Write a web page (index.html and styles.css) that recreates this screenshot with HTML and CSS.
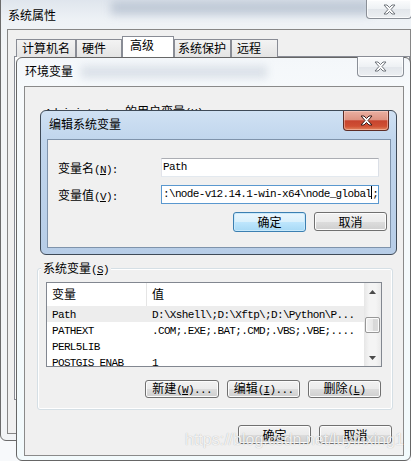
FILE: index.html
```html
<!DOCTYPE html>
<html>
    <head>
        <meta charset="utf-8">
        <title>系统属性 - 环境变量</title>
        <link rel="stylesheet" href="styles.css">
    </head>
    <body>
        <!-- 系统属性 -->
        <div class="win win-sys">
            <div class="win-title">
                <span class="glass glass-sys"></span>
                <span class="title-text">系统属性</span>
                <button class="close">
                    <svg viewBox="0 0 13 11" width="13" height="11"><path d="M1 1h3l2.5 2.5L9 1h3L8 5.5 12 10H9L6.5 7.5 4 10H1l4-4.5z"/></svg>
                </button>
            </div>
            <div class="sys-body">
                <div class="tabs">
                    <span class="tab tab-name">计算机名</span>
                    <span class="tab tab-hw">硬件</span>
                    <span class="tab tab-adv active">高级</span>
                    <span class="tab tab-prot">系统保护</span>
                    <span class="tab tab-remote">远程</span>
                </div>
                <div class="tab-page"></div>
            </div>
        </div>

        <!-- 环境变量 -->
        <div class="win win-env">
            <div class="win-title">
                <span class="glass glass-env"></span>
                <span class="title-text">环境变量</span>
                <button class="close">
                    <svg viewBox="0 0 13 11" width="13" height="11"><path d="M1 1h3l2.5 2.5L9 1h3L8 5.5 12 10H9L6.5 7.5 4 10H1l4-4.5z"/></svg>
                </button>
            </div>
            <div class="env-body">
                <div class="user-group">
                    <span class="mono">Administrator</span> 的用户变量<span class="mono">(<u>U</u>)</span>
                </div>

                <div class="group sys-group">
                    <span class="group-label">系统变量<span class="mono">(<u>S</u>)</span></span>

                    <div class="list">
                        <div class="list-main">
                            <div class="list-head">
                                <span class="col col-name">变量</span>
                                <span class="col col-value">值</span>
                            </div>
                            <div class="row selected">
                                <span class="col col-name mono">Path</span>
                                <span class="col col-value mono">D:\Xshell\;D:\Xftp\;D:\Python\P...</span>
                            </div>
                            <div class="row">
                                <span class="col col-name mono">PATHEXT</span>
                                <span class="col col-value mono">.COM;.EXE;.BAT;.CMD;.VBS;.VBE;....</span>
                            </div>
                            <div class="row">
                                <span class="col col-name mono">PERL5LIB</span>
                                <span class="col col-value mono"></span>
                            </div>
                            <div class="row">
                                <span class="col col-name mono">POSTGIS_ENAB</span>
                                <span class="col col-value mono">1</span>
                            </div>
                        </div>
                        <div class="scrollbar">
                            <span class="sb-btn">
                                <svg viewBox="0 0 7 4" width="7" height="4"><path d="M0 4L3.5 0 7 4z"/></svg>
                            </span>
                            <span class="sb-track"><span class="sb-thumb"></span></span>
                            <span class="sb-btn">
                                <svg viewBox="0 0 7 4" width="7" height="4"><path d="M0 0h7L3.5 4z"/></svg>
                            </span>
                        </div>
                    </div>

                    <div class="group-actions">
                        <button class="btn btn-new">新建<span class="mono">(<u>W</u>)...</span></button>
                        <button class="btn">编辑<span class="mono">(<u>I</u>)...</span></button>
                        <button class="btn">删除<span class="mono">(<u>L</u>)</span></button>
                    </div>
                </div>

                <div class="env-actions">
                    <button class="btn btn-tall">确定</button>
                    <button class="btn btn-tall">取消</button>
                </div>
            </div>
        </div>

        <!-- 编辑系统变量 -->
        <div class="win win-edit">
            <div class="win-title">
                <span class="title-text">编辑系统变量</span>
                <button class="close close-red">
                    <svg viewBox="0 0 13 11" width="13" height="11"><path d="M1 1h3l2.5 2.5L9 1h3L8 5.5 12 10H9L6.5 7.5 4 10H1l4-4.5z"/></svg>
                </button>
            </div>
            <div class="edit-body">
                <div class="field">
                    <label>变量名<span class="mono">(<u>N</u>):</span></label>
                    <span class="box mono">Path</span>
                </div>
                <div class="field">
                    <label>变量值<span class="mono">(<u>V</u>):</span></label>
                    <span class="box focus mono">:\node-v12.14.1-win-x64\node_global<span class="caret"></span>;</span>
                </div>
                <div class="edit-actions">
                    <button class="btn btn-tall btn-default">确定</button>
                    <button class="btn btn-tall">取消</button>
                </div>
            </div>
        </div>

        <div class="watermark">https://blog.csdn.net/luyinxing1</div>
    </body>
</html>
```

FILE: styles.css
```css
:root {
    --face: #f0f0f0;
    --tab-border: #898c95;
    --btn-border: #707070;
    --cjk: "Noto Sans CJK SC", sans-serif;
    --mono: "Liberation Mono", "Noto Sans CJK SC", monospace;
}

* {
    box-sizing: border-box;
}

body {
    margin: 0;
    width: 411px;
    height: 461px;
    overflow: hidden;
    position: relative;
    background-color: #f7f9fb;
    font-family: var(--cjk);
    font-size: 12px;
    color: #000;
}

.mono {
    font-family: var(--mono);
    font-size: 11px;
    letter-spacing: -0.65px;
}

u {
    text-decoration-thickness: 1px;
    text-underline-offset: 1px;
}

/* windows */

.win {
    position: absolute;
    display: flex;
    flex-direction: column;
    border: 1px solid #6b6b6b;
    border-radius: 6px;
}

.win-title {
    position: relative;
    display: flex;
    flex: none;
    align-items: center;
    line-height: 16px;
}

.title-text {
    position: relative;
}

.glass {
    position: absolute;
    filter: blur(4px);
}

.close {
    position: absolute;
    top: 0;
    display: flex;
    align-items: center;
    justify-content: center;
    padding: 0;
    border: 1px solid #8a8f97;
    border-top: none;
    border-radius: 0 0 4px 4px;
    background: linear-gradient(#fbfcfd, #eef1f4 50%, #e2e6eb 51%, #eceff2);
    box-shadow: inset 0 0 0 1px rgba(255, 255, 255, 0.7);
}

.close svg path {
    fill: #fff;
    stroke: #6f747b;
    stroke-width: 1;
    stroke-linejoin: round;
}

.close-red {
    border-color: #5e2d26;
    background: linear-gradient(#eab0a2, #de9483 45%, #c7442e 52%, #cf4f33 80%, #e2865f);
    box-shadow: inset 0 0 0 1px rgba(255, 220, 210, 0.45);
}

.close-red svg path {
    stroke: #3a1d1a;
}

/* 系统属性 */

.win-sys {
    left: 0;
    top: -10px;
    width: 418px;
    height: 451px;
    background: linear-gradient(#d9e0e9, #eef2f6 30px, #f2f4f6 60px, #f2f4f6);
}

.win-sys .win-title {
    height: 38px;
    align-items: flex-end;
    padding: 0 0 6px 7px;
}

.glass-sys {
    left: 110px;
    top: 10px;
    width: 260px;
    height: 14px;
    background-color: rgba(110, 128, 158, 0.3);
}

.win-sys .close {
    left: 365px;
    top: 9px;
    width: 46px;
    height: 19px;
}

.sys-body {
    flex: 1;
    margin: 0 6px 6px;
    padding: 6px 0 0 8px;
    border: 1px solid #868686;
    background-color: var(--face);
}

.tabs {
    display: flex;
    align-items: flex-end;
    height: 21px;
}

.tab {
    height: 18px;
    padding-left: 5px;
    border: 1px solid var(--tab-border);
    border-bottom: none;
    background: linear-gradient(#f3f3f3, #e4e4e4);
    line-height: 16px;
}

.tab.active {
    height: 21px;
    padding-left: 7px;
    background-color: #fff;
    background-image: none;
}

.tab-name { width: 60px; }
.tab-hw { width: 46px; }
.tab-adv { width: 52px; }
.tab-prot { width: 57px; padding-left: 3px; }
.tab-remote { width: 47px; }

.tab-page {
    flex: none;
    height: 344px;
    margin: -1px 0 0 -2px;
    border: 1px solid var(--tab-border);
    background-color: #fbfbfb;
}

/* 环境变量 */

.win-env {
    left: 16px;
    top: 57px;
    width: 395px;
    height: 404px;
    border-color: #666;
    background: linear-gradient(#f4f7fa, #f7fafc 40px, #f2fafc);
}

.win-env .win-title {
    height: 28px;
    padding: 0 0 2px 8px;
}

.glass-env {
    left: 64px;
    top: 8px;
    width: 186px;
    height: 12px;
    background-color: rgba(140, 156, 180, 0.25);
}

.win-env .close {
    left: 340px;
    top: -1px;
    width: 47px;
    height: 20px;
}

.env-body {
    flex: 1;
    margin: 0 6px 4px 7px;
    border: 1px solid #8a8a8a;
    background-color: var(--face);
}

.user-group {
    height: 165px;
    padding: 16px 0 0 20px;
    line-height: 16px;
}

.group {
    position: relative;
    border: 1px solid #d5dfe5;
    border-radius: 3px;
    box-shadow: inset 0 0 0 1px #fff;
}

.group-label {
    position: absolute;
    top: -8px;
    left: 3px;
    padding: 0 2px;
    line-height: 14px;
    background-color: var(--face);
}

.sys-group {
    height: 142px;
    margin: 16px 10px 0 12px;
    padding: 13px 0 0 8px;
}

/* list view */

.list {
    display: flex;
    width: 336px;
    height: 85px;
    border: 1px solid #828790;
    background-color: #fff;
    overflow: hidden;
}

.list-main {
    flex: 1;
    overflow: hidden;
}

.list-head {
    display: flex;
    height: 23px;
    line-height: 21px;
}

.col {
    flex: none;
    white-space: nowrap;
}

.col-name {
    width: 100px;
    padding-left: 5px;
}

.col-value {
    padding-left: 5px;
}

.list-head .col-name {
    border-right: 1px solid #e5e5e5;
}

.row {
    display: flex;
    height: 16px;
    line-height: 18px;
}

.row.selected {
    background-color: #ededed;
}

.scrollbar {
    display: flex;
    flex-direction: column;
    width: 17px;
    background: linear-gradient(90deg, #e6e6e6, #f4f4f4 30%, #f4f4f4 70%, #e9e9e9);
}

.sb-btn {
    display: flex;
    align-items: center;
    justify-content: center;
    height: 17px;
}

.sb-btn svg path {
    fill: #4a4a4a;
}

.sb-track {
    flex: 1;
    padding: 17px 0 0 1px;
}

.sb-thumb {
    display: block;
    width: 15px;
    height: 16px;
    border: 1px solid #979797;
    border-radius: 2px;
    background: linear-gradient(90deg, #f3f3f3, #e8e8e8 50%, #d8d8d8 51%, #dcdcdc);
    box-shadow: inset 0 0 0 1px #fbfbfb;
}

/* buttons */

.btn {
    flex: none;
    width: 73px;
    height: 18px;
    padding: 0;
    border: 1px solid var(--btn-border);
    border-radius: 3px;
    background: linear-gradient(#f2f2f2, #ebebeb 50%, #dddddd 51%, #cfcfcf);
    box-shadow: inset 0 0 0 1px #fcfcfc;
    font-family: var(--cjk);
    font-size: 12px;
    line-height: 14px;
    color: #000;
}

.btn-tall {
    height: 19px;
}

.btn-new {
    width: 74px;
}

.btn-default {
    height: 20px;
    border-color: #3c7fb1;
    background: linear-gradient(#eaf6fd, #d9f0fc 50%, #bee6fd 51%, #a7d9f5);
    box-shadow: inset 0 0 0 1px #c8e9fb;
}

.group-actions {
    display: flex;
    justify-content: flex-end;
    gap: 8px;
    width: 336px;
    margin-top: 13px;
    padding-right: 1px;
}

.env-actions {
    display: flex;
    justify-content: flex-end;
    gap: 8px;
    margin-top: 15px;
    padding-right: 11px;
}

/* 编辑系统变量 */

.win-edit {
    left: 40px;
    top: 110px;
    width: 357px;
    height: 145px;
    border-color: #3f4a57;
    background: linear-gradient(#d0e1f3, #c1d6ed 28px, #b7cde7);
}

.win-edit .win-title {
    height: 28px;
    padding: 0 0 3px 8px;
}

.win-edit .close {
    left: 302px;
    width: 46px;
    height: 20px;
}

.edit-body {
    flex: 1;
    margin: 0 5px 6px 6px;
    padding: 18px 0 0 10px;
    border: 1px solid #7f93ab;
    background-color: var(--face);
}

.field {
    display: flex;
    align-items: center;
    height: 19px;
    margin-bottom: 8px;
}

.field label {
    flex: none;
    width: 103px;
}

.box {
    display: block;
    width: 218px;
    height: 19px;
    padding-left: 1px;
    border: 1px solid;
    border-color: #abadb3 #dbdfe6 #e3e9ef #e2e3ea;
    background-color: #fff;
    line-height: 17px;
    white-space: nowrap;
    overflow: hidden;
}

.box.focus {
    border-color: #5a98cf;
}

.caret {
    display: inline-block;
    width: 1px;
    height: 13px;
    vertical-align: -2px;
    background-color: #000;
}

.edit-actions {
    display: flex;
    gap: 8px;
    margin-top: 4px;
    padding-left: 175px;
}

.watermark {
    position: absolute;
    left: 185px;
    top: 431px;
    font-family: "Liberation Sans", Arial, sans-serif;
    font-size: 16px;
    line-height: 18px;
    color: rgba(255, 255, 255, 0.85);
    text-shadow: 0 0 1px rgba(0, 0, 0, 0.3);
}
```
